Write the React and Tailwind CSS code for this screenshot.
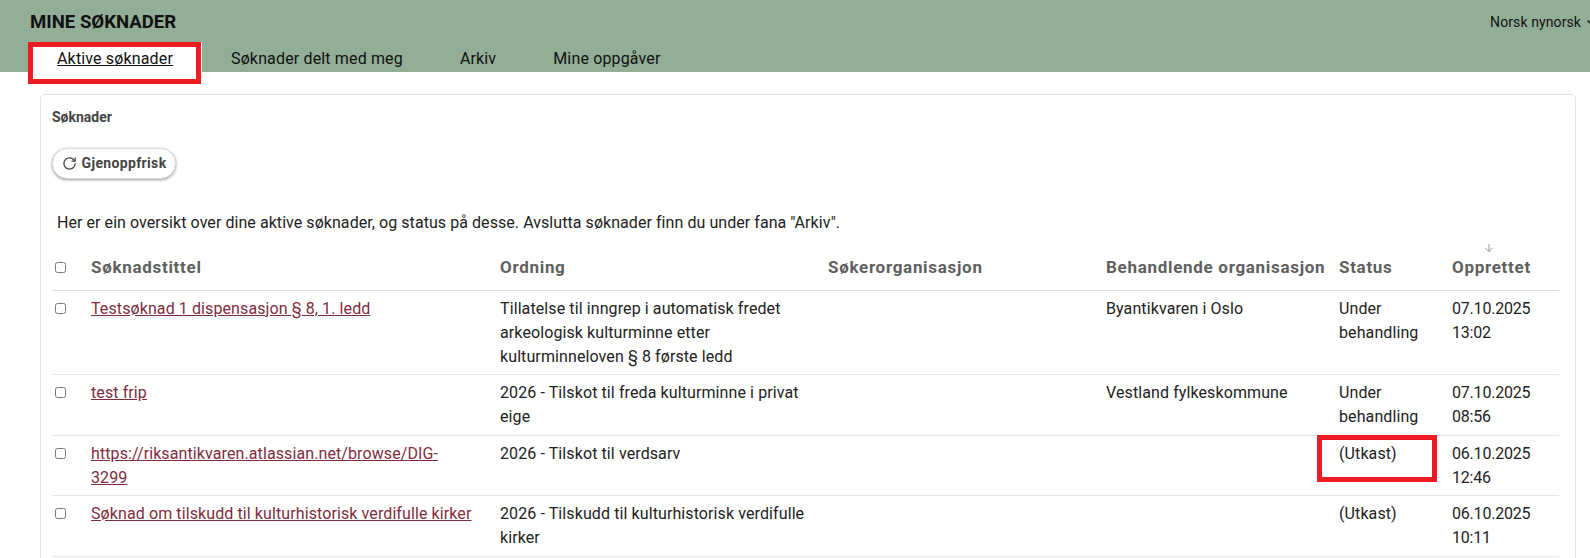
import React from "react";
import { RotateCw, ArrowDown, ChevronDown } from "lucide-react";

const rows = [
  { t: "Testsøknad 1 dispensasjon § 8, 1. ledd", o: "Tillatelse til inngrep i automatisk fredet arkeologisk kulturminne etter kulturminneloven § 8 første ledd", b: "Byantikvaren i Oslo", s: "Under behandling", d: "07.10.2025", h: "13:02", cls: "h-[84px]" },
  { t: "test frip", o: "2026 - Tilskot til freda kulturminne i privat eige", b: "Vestland fylkeskommune", s: "Under behandling", d: "07.10.2025", h: "08:56", cls: "h-[61px]" },
  { t: "https://riksantikvaren.atlassian.net/browse/DIG-\n3299", o: "2026 - Tilskot til verdsarv", b: "", s: "(Utkast)", d: "06.10.2025", h: "12:46", cls: "h-[60px]" },
  { t: "Søknad om tilskudd til kulturhistorisk verdifulle kirker", o: "2026 - Tilskudd til kulturhistorisk verdifulle kirker", b: "", s: "(Utkast)", d: "06.10.2025", h: "10:11", cls: "h-[61px]" },
];

const tabs = ["Søknader delt med meg", "Arkiv", "Mine oppgåver"];

export default function App() {
  return (
    <div className="relative h-[558px] overflow-hidden bg-white text-[#212121] font-['Roboto',sans-serif]">
      <header className="relative h-[72px] bg-[#92ae97] pl-[30px]">
        <div className="flex items-start justify-between pt-[11px]">
          <h1 className="text-[18.6px] leading-[22px] font-bold text-[#111]">MINE SØKNADER</h1>
          <div className="flex items-center gap-[5px] pt-[1px] text-[14px] leading-[20px] tracking-[0.1px] text-[#111] -mr-[4px]">
            Norsk nynorsk <ChevronDown size={8} strokeWidth={4} />
          </div>
        </div>
        <nav className="absolute bottom-0 left-[28px] flex h-[30px] text-[16px] leading-[30px] tracking-[0.15px] text-[#111]">
          <a className="w-[174px] bg-white pt-[2px] text-center underline">Aktive søknader</a>
          <a className="ml-[29px] pt-[2px]">{tabs[0]}</a>
          <a className="ml-[57px] pt-[2px]">{tabs[1]}</a>
          <a className="ml-[57px] pt-[2px]">{tabs[2]}</a>
        </nav>
      </header>
      <div className="absolute left-[28px] top-[42px] h-[42px] w-[173px] border-[5px] border-[#ed1c24]" />
      <main className="pl-[40px] pr-[14px] pt-[22px]">
        <section className="h-[600px] rounded-[5px] border border-[#e3e3e3] pl-[11px] pr-[15px]">
          <h2 className="pt-[13px] text-[14px] leading-[18px] font-bold text-[#444]">Søknader</h2>
          <button className="mt-[22px] flex h-[31px] w-[124px] items-center justify-center gap-[5px] rounded-full border border-[#ddd] bg-white text-[14px] font-bold tracking-[0.35px] text-[#444] shadow-[0_1px_3px_rgba(0,0,0,0.4)]">
            <RotateCw size={15} strokeWidth={2} className="text-[#444]" />
            Gjenoppfrisk
          </button>
          <p className="mt-[32px] pl-[5px] text-[16px] leading-[24px] tracking-[0.06px] text-[#222]">
            Her er ein oversikt over dine aktive søknader, og status på desse. Avslutta søknader finn du under fana "Arkiv".
          </p>
          <table className="mt-[10px] w-[1507px] table-fixed border-collapse text-left text-[16px] leading-[24.3px] tracking-[0.1px]">
            <colgroup>
              <col className="w-[39px]" />
              <col className="w-[409px]" />
              <col className="w-[328px]" />
              <col className="w-[278px]" />
              <col className="w-[233px]" />
              <col className="w-[113px]" />
              <col className="w-[107px]" />
            </colgroup>
            <thead>
              <tr className="h-[45px] border-b border-[#ddd] text-[17px] text-[#5f5f5f] tracking-[0.7px]">
                <th className="pl-[3px] align-middle font-bold"><input type="checkbox" className="block h-[11px] w-[11px]" /></th>
                <th className="font-bold">Søknadstittel</th>
                <th className="font-bold">Ordning</th>
                <th className="font-bold">Søkerorganisasjon</th>
                <th className="font-bold whitespace-nowrap">Behandlende organisasjon</th>
                <th className="font-bold">Status</th>
                <th className="relative font-bold">
                  Opprettet
                  <ArrowDown size={12} className="absolute left-[31px] top-[-3px] text-[#999]" />
                </th>
              </tr>
            </thead>
            <tbody className="text-[#222]">
              {rows.map((r) => (
                <tr key={r.t} className={`${r.cls} border-b border-[#e6e6e6] align-top`}>
                  <td className="pl-[3px] pt-[12px]"><input type="checkbox" className="block h-[11px] w-[11px]" /></td>
                  <td className="pr-[8px] pt-[6px] whitespace-pre-line"><a className="text-[#802c40] underline">{r.t}</a></td>
                  <td className="pr-[12px] pt-[6px]">{r.o}</td>
                  <td className="pt-[6px]"></td>
                  <td className="pt-[6px]">{r.b}</td>
                  <td className="pr-[8px] pt-[6px]">{r.s}</td>
                  <td className="pt-[6px] tracking-[-0.2px]">{r.d}<br />{r.h}</td>
                </tr>
              ))}
            </tbody>
          </table>
        </section>
      </main>
      <div className="absolute left-[1317px] top-[435px] h-[47px] w-[120px] border-[5px] border-[#ed1c24]" />
    </div>
  );
}
